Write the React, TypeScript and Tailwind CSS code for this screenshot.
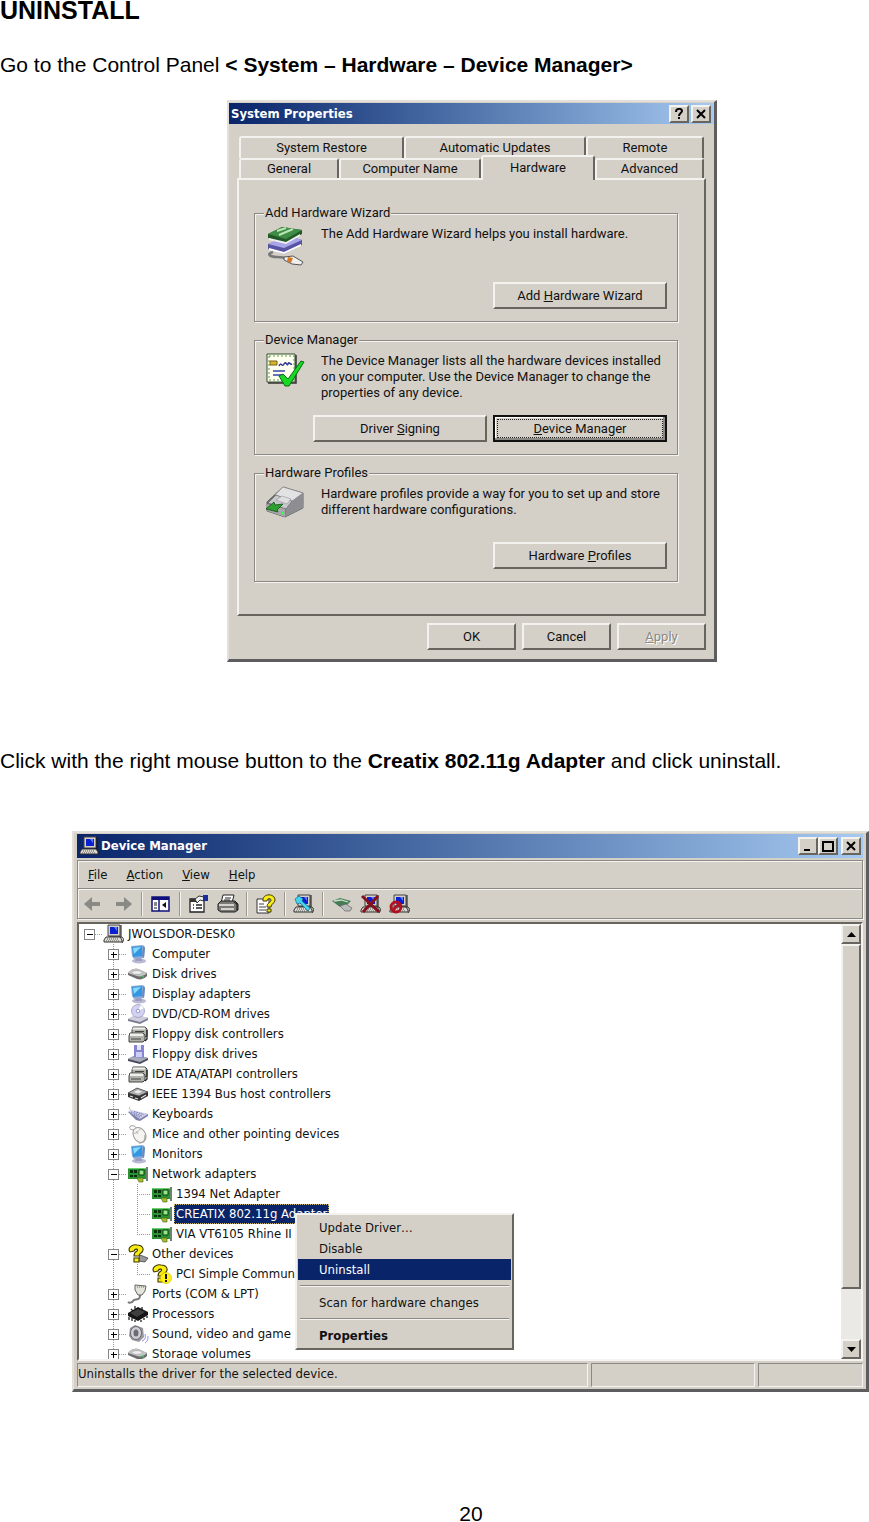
import React from "react";

const ui = "font-['Liberation_Sans',Arial,sans-serif]";
const dialogFont = "font-[Roboto,'Liberation_Sans',sans-serif]";
const tahoma = "font-['DejaVu_Sans_Condensed','DejaVu_Sans',sans-serif]";
const raised = "bg-[#d4d0c8] border-t-2 border-l-2 border-b-2 border-r-2 border-t-[#f4f2ee] border-l-[#f4f2ee] border-b-[#68655f] border-r-[#68655f]";

/* ---------- shared drawings ---------- */

function Svg({ size = "h-5 w-[22px]", box = "0 0 22 20", children }: { size?: string; box?: string; children: React.ReactNode }) {
  return (
    <svg className={`${size} shrink-0`} viewBox={box} aria-hidden="true">
      {children}
    </svg>
  );
}

function PcShape() {
  return (
    <>
      <path d="M5 1h12v11H5z" fill="#d4d0c8" stroke="#444" />
      <path d="M7 3h8v7H7z" fill="#0a1fd0" />
      <path d="M11 3h3v4z" fill="#5f7dff" />
      <path d="M18 1v12H6" fill="none" stroke="#111" />
      <path d="M3 13h14l2 3v2H1v-2z" fill="#dedbd3" stroke="#333" />
      <path d="M4 15h12M3 17h13" stroke="#555" strokeDasharray="1 1" />
      <path d="M18 13c3 0 3 4 1 6" fill="none" stroke="#222" />
    </>
  );
}

function MonitorIcon() {
  return (
    <Svg>
      <ellipse cx="12" cy="17" rx="7" ry="2.5" fill="#b9b9d2" />
      <path d="M9 12h5l1 5H8z" fill="#9c9cc2" />
      <path d="M4 2l12-1 2 2-1 11-10 1-2-3z" fill="#8fabd4" />
      <path d="M5 3l10-1v10l-9 1z" fill="#3296e4" />
      <path d="M6 4l8-1-7 7z" fill="#86dcf8" />
      <path d="M16 2l2 2-1 10-2-2z" fill="#7088b8" />
    </Svg>
  );
}

function DiskIcon() {
  return (
    <Svg>
      <path d="M1 9c3-4 7-5 10-4l9 4v3c-3 3-7 4-10 3l-9-4z" fill="#6d6d6d" />
      <path d="M1 9c3-4 7-5 10-4l9 4c-3 3-7 4-10 3z" fill="#c4c4c4" />
      <ellipse cx="10" cy="8.500" rx="5" ry="2" fill="#eee" stroke="#999" strokeWidth=".6" />
      <circle cx="16" cy="12.500" r="1" fill="#3c6" />
    </Svg>
  );
}

function CdIcon() {
  return (
    <Svg>
      <path d="M1 15l8-4 12 3v2l-8 4-12-3z" fill="#7d7d92" />
      <path d="M1 15l8-4 12 3-8 4z" fill="#cfcfdd" />
      <circle cx="11" cy="7" r="6.500" fill="#d4d2f3" stroke="#9090bc" strokeWidth=".7" />
      <path d="M11 7l3-6 3 3z" fill="#fff" />
      <circle cx="11" cy="7" r="1.800" fill="#fff" stroke="#8585c0" strokeWidth=".8" />
    </Svg>
  );
}

function ControllerIcon() {
  return (
    <Svg>
      <path d="M6 3h12l2 2v7l-2 1H5V6z" fill="#b2b2ac" stroke="#333" strokeWidth=".9" />
      <path d="M6 3.500h12v2H5z" fill="#efefec" />
      <path d="M3 9h13l2 2v5l-2 2H2v-6z" fill="#b2b2ac" stroke="#333" strokeWidth=".9" />
      <path d="M3 9.500h13v2.500H3z" fill="#efefec" />
      <path d="M4 15h10M8 7.500h9" stroke="#444" />
      <path d="M18 17l2-2V6" fill="none" stroke="#222" strokeWidth="1.300" />
    </Svg>
  );
}

function FloppyIcon() {
  return (
    <Svg>
      <path d="M1 15l8-4 12 3v2l-8 4-12-3z" fill="#484b5c" />
      <path d="M1 15l8-4 12 3-8 4z" fill="#a9abba" />
      <path d="M7 1h10v13l-10-1z" fill="#8686d0" />
      <path d="M10 1h4v5h-4z" fill="#e5e5f7" />
      <path d="M9 8h6v5H9z" fill="#cfcff4" />
    </Svg>
  );
}

function FirewireIcon() {
  return (
    <Svg>
      <path d="M1 9l9-5 11 4v4l-9 5-11-4z" fill="#333" />
      <path d="M1 9l9-5 11 4-9 4z" fill="#b0b0b0" stroke="#333" strokeWidth=".6" />
      <path d="M7 8l4-2 4 1.500-4 2z" fill="#eee" />
      <path d="M3 12l3 1M8 14l3 1M14 14l5-3" stroke="#ddd" strokeWidth="1.300" />
    </Svg>
  );
}

function KeyboardIcon() {
  return (
    <Svg>
      <path d="M3 3c-2 2 1 3 2 4" fill="none" stroke="#aaa" />
      <path d="M1 8l3-1 17 3v2l-8 5-4-1z" fill="#8082ae" />
      <path d="M1 7l4-1 16 4-8 5z" fill="#ccceea" />
      <path d="M4 8l11 4M7 7.500l10 3M7 10.500l6 2.500" stroke="#7578ac" strokeDasharray="1.500 1" />
    </Svg>
  );
}

function MouseIcon() {
  return (
    <Svg>
      <path d="M7 6C3 6 1 3 4 2s5 1 6 3" fill="none" stroke="#999" />
      <ellipse cx="12.500" cy="11" rx="6" ry="8" transform="rotate(-30 12.500 11)" fill="#f5f4f1" stroke="#999" />
      <path d="M6 9c3 1 5-1 7-4M9 7l2 3" fill="none" stroke="#aaa" strokeWidth=".8" />
      <path d="M12 19c5 0 7-3 6-8" fill="none" stroke="#a9a59b" strokeWidth="1.600" />
    </Svg>
  );
}

function NicIcon() {
  return (
    <Svg>
      <path d="M1 4h18v11H1z" fill="#2a9432" />
      <path d="M1 4h18v1H1z" fill="#6cd073" />
      <path d="M3 6h3v3H3zM7 6h3v3H7zM3 11h3v2H3zM7 11h3v2H7z" fill="#082f0c" />
      <path d="M12 6h5v5h-5z" fill="#9be488" stroke="#0a4010" />
      <path d="M10 14h6v4h-4z" fill="#a9bc2f" stroke="#44601a" strokeWidth=".6" />
      <path d="M20 3v14" stroke="#3b5a3b" strokeWidth="1.500" />
    </Svg>
  );
}

function QuestionShape() {
  return (
    <path d="M3 8c-3-4 2-8 7-7 6 0 8 5 4 8-2 1-2 2-2 3H7c0-3 1-4 3-5 2-2-2-3-3 0zM7 14h5v4H7z" fill="#f8ec12" stroke="#3d3800" strokeWidth="1.100" />
  );
}

function UnknownIcon() {
  return (
    <Svg>
      <path d="M13 11l8 3-3 4-7-1z" fill="#999" stroke="#333" strokeWidth=".7" />
      <QuestionShape />
    </Svg>
  );
}

function UnknownWarnIcon() {
  return (
    <Svg>
      <QuestionShape />
      <circle cx="15" cy="14" r="5.500" fill="#fff01a" stroke="#c9b800" strokeWidth=".6" />
      <path d="M14 10h2v5h-2zM14 16h2v2h-2z" fill="#111" />
    </Svg>
  );
}

function PortIcon() {
  return (
    <Svg>
      <path d="M8 1l11 1-1 5-3 4h-4L8 6z" fill="#e3e3dc" stroke="#555" strokeWidth=".9" />
      <path d="M10 3h7" stroke="#666" strokeDasharray="1 1" />
      <path d="M13 11c0 7-5 3-7 6-1 2-4 2-5 1" fill="none" stroke="#777" strokeWidth="2" />
    </Svg>
  );
}

function CpuIcon() {
  return (
    <Svg>
      <path d="M1 9l10-6 10 5v3l-10 6-10-5z" fill="#161616" />
      <path d="M3 9l8-4 7 3-8 5z" fill="#3f3f3f" />
      <path d="M2 13v3M5 14v3M8 16v2M14 16v2M17 14v2M20 12v2M4 5l2 2M8 2v3M15 3v3" stroke="#222" strokeWidth="1.300" />
    </Svg>
  );
}

function SpeakerIcon() {
  return (
    <Svg>
      <path d="M3 4l5-3 8 3 1 9-5 5-7-2-3-4z" fill="#97979c" />
      <ellipse cx="9" cy="9" rx="5.500" ry="6.500" fill="#cfcfd5" stroke="#6a6a70" />
      <ellipse cx="9" cy="9" rx="2.500" ry="3.500" fill="#6b6b75" />
      <path d="M15 17c3-1 4-4 3-7M18 19c3-2 3-5 3-7" fill="none" stroke="#8c8ce6" />
    </Svg>
  );
}

function RootIcon() {
  return (
    <Svg>
      <PcShape />
    </Svg>
  );
}

/* ---------- System Properties ---------- */

function CaptionButton({ label, children }: { label: string; children: React.ReactNode }) {
  return (
    <button aria-label={label} className={`flex h-[18px] w-5 items-center justify-center ${raised}`}>
      <svg className="h-3 w-3" viewBox="0 0 12 12" aria-hidden="true">
        {children}
      </svg>
    </button>
  );
}

function CloseGlyph() {
  return <path d="M2 2l8 8M10 2l-8 8" stroke="#000" strokeWidth="2" />;
}

function Tab({ className, children }: { className: string; children: React.ReactNode }) {
  return (
    <button
      role="tab"
      className={`rounded-t-[3px] border-t-2 border-r-2 border-l-2 border-t-[#f4f2ee] border-r-[#68655f] border-l-[#f4f2ee] bg-[#d4d0c8] text-center ${className}`}
    >
      {children}
    </button>
  );
}

function PushButton({ className, disabled, children }: { className: string; disabled?: boolean; children: React.ReactNode }) {
  return (
    <button disabled={disabled} className={`h-[27px] text-center ${raised} ${className}`}>
      {children}
    </button>
  );
}

function Group({ title, height, icon, text, children }: { title: string; height: string; icon: React.ReactNode; text: React.ReactNode; children: React.ReactNode }) {
  return (
    <fieldset className="border border-[#8c8984] px-[10px] pb-3 shadow-[1px_1px_0_#f6f4f0,inset_1px_1px_0_#f6f4f0]">
      <legend className="-ml-px bg-[#d4d0c8] px-px leading-4">{title}</legend>
      <div className={`flex flex-col ${height}`}>
        <div className="flex grow gap-4 pt-[5px]">
          <div className="w-10">{icon}</div>
          <p className="leading-4 whitespace-nowrap">{text}</p>
        </div>
        <div className="flex justify-end gap-[6px]">{children}</div>
      </div>
    </fieldset>
  );
}

function WizardIcon() {
  return (
    <Svg size="h-10 w-10" box="0 0 40 40">
      <path d="M3 18l20-8 14 4v5l-18 9L3 23z" fill="#5953a4" />
      <path d="M3 18l20-8 14 4-18 8z" fill="#aaa5ea" />
      <path d="M4 22l15 4 17-8v2l-17 8-15-4z" fill="#fff" />
      <path d="M3 8L17 1l20 3v4l-16 9L3 12z" fill="#225a27" />
      <path d="M3 8L17 1l20 3-16 9z" fill="#3f8d45" />
      <path d="M12 5l9-3M14 9l14-6" stroke="#b9e5b9" strokeWidth="2" />
      <path d="M4 12l17 4 14-8v2l-14 8-17-4z" fill="#eee" />
      <path d="M8 26c-7 2-3 5 4 5s8 1 11 3" fill="none" stroke="#777" strokeWidth="2.500" />
      <path d="M19 31l9-1 10 6-2 3-9-1-8-4z" fill="#eee" stroke="#555" />
      <path d="M23 31l5 1-2 5-4-2z" fill="#d77923" />
    </Svg>
  );
}

function SigningIcon() {
  return (
    <Svg size="h-10 w-10" box="0 0 40 40">
      <path d="M2 1h28v28H2z" fill="#fffff0" stroke="#31502d" />
      <path d="M4 3h25v24H4z" fill="none" stroke="#5a9b48" strokeDasharray="2 2" />
      <path d="M5 8h7v4H5z" fill="#d9b52e" stroke="#7a6114" />
      <path d="M14 13c2-5 3 2 5-2s3 3 4 0 2 1 4 0" fill="none" stroke="#32329a" strokeWidth="1.500" />
      <path d="M8 18h12M8 22h10" stroke="#3945a8" strokeWidth="1.500" />
      <path d="M31 2v28H3" fill="none" stroke="#333" strokeWidth="1.500" />
      <path d="M14 23l4-2 5 5L36 8l3 1-15 24h-4z" fill="#15d922" stroke="#0b6a14" />
    </Svg>
  );
}

function ProfilesIcon() {
  return (
    <Svg size="h-10 w-10" box="0 0 40 40">
      <path d="M2 16L18 1l20 6v15L20 31 2 25z" fill="#77777a" stroke="#4a4a4a" strokeWidth=".8" />
      <path d="M10 9l8-8 20 6-12 9z" fill="#e2e2e5" stroke="#888" strokeWidth=".6" />
      <path d="M3 17l8-8 16 6-6 8z" fill="#c8c8cb" stroke="#666" strokeWidth=".7" />
      <path d="M11 14l6-4 9 3-4 5z" fill="#dedee1" stroke="#888" strokeWidth=".5" />
      <path d="M21 23l6-8 11-8v15L20 31z" fill="#8e8e92" />
      <path d="M2 18l18 5v8L2 25z" fill="#a7a7aa" />
      <path d="M1 23l8-7 1 3 8-1-6 6 1 2z" fill="#2da02f" stroke="#125218" strokeWidth=".8" />
      <circle cx="18" cy="27" r="1.200" fill="#3f4" />
    </Svg>
  );
}

function SystemProperties() {
  return (
    <section className={`ml-[227px] flex max-w-[490px] flex-col border-t-2 border-r-[3px] border-b-[3px] border-l-2 border-t-[#e3e0da] border-r-[#5d5d60] border-b-[#5d5d60] border-l-[#e3e0da] bg-[#d4d0c8] pt-px text-[13px] leading-4 text-[#111] ${dialogFont}`}>
      <header className="flex h-[21px] items-center bg-linear-to-r from-[#0a246a] to-[#a6caf0] pr-[3px] pl-[2px]">
        <h2 className={`grow text-[13px] font-bold text-white ${tahoma}`}>System Properties</h2>
        <div className="flex gap-[2px]">
          <CaptionButton label="Help">
            <path d="M3 4c0-4 6-4 6-1 0 2-3 2-3 5M6 9v2" fill="none" stroke="#000" strokeWidth="2" />
          </CaptionButton>
          <CaptionButton label="Close">
            <CloseGlyph />
          </CaptionButton>
        </div>
      </header>
      <div className="px-2 pt-3">
        <div role="tablist">
          <div className="flex h-[22px] px-[2px]">
            <Tab className="w-[165px]">System Restore</Tab>
            <Tab className="w-[182px]">Automatic Updates</Tab>
            <Tab className="grow">Remote</Tab>
          </div>
          <div className="flex h-5 px-[2px]">
            <Tab className="w-[100px]">General</Tab>
            <Tab className="w-[142px]">Computer Name</Tab>
            <Tab className="relative z-10 -mt-[3px] -mb-[2px] w-[114px] pb-[2px]">Hardware</Tab>
            <Tab className="grow">Advanced</Tab>
          </div>
        </div>
        <div className="flex flex-col gap-[10px] border-2 border-t-[#f4f2ee] border-r-[#68655f] border-b-[#68655f] border-l-[#f4f2ee] pt-[25px] pr-[26px] pb-8 pl-[15px]">
          <Group title="Add Hardware Wizard" height="h-[88px]" icon={<WizardIcon />} text="The Add Hardware Wizard helps you install hardware.">
            <PushButton className="w-[174px]">
              Add <u>H</u>ardware Wizard
            </PushButton>
          </Group>
          <Group
            title="Device Manager"
            height="h-[94px]"
            icon={<SigningIcon />}
            text={
              <>
                The Device Manager lists all the hardware devices installed
                <br />
                on your computer. Use the Device Manager to change the
                <br />
                properties of any device.
              </>
            }
          >
            <PushButton className="w-[174px]">
              Driver <u>S</u>igning
            </PushButton>
            <button className="h-[27px] w-[174px] border-2 border-[#111] bg-[#d4d0c8] p-[2px] shadow-[inset_-2px_-2px_0_#8c8984,inset_1px_1px_0_#fff]">
              <span className="flex h-full items-center justify-center border border-dotted border-[#222]">
                <span>
                  <u>D</u>evice Manager
                </span>
              </span>
            </button>
          </Group>
          <Group
            title="Hardware Profiles"
            height="h-[88px]"
            icon={<ProfilesIcon />}
            text={
              <>
                Hardware profiles provide a way for you to set up and store
                <br />
                different hardware configurations.
              </>
            }
          >
            <PushButton className="w-[174px]">
              Hardware <u>P</u>rofiles
            </PushButton>
          </Group>
        </div>
        <div className="flex justify-end gap-[6px] pt-[7px] pb-[9px]">
          <PushButton className="w-[89px]">OK</PushButton>
          <PushButton className="w-[89px]">Cancel</PushButton>
          <PushButton disabled className="w-[89px] text-[#8c8984] [text-shadow:1px_1px_0_#fff]">
            <u>A</u>pply
          </PushButton>
        </div>
      </div>
    </section>
  );
}

/* ---------- Device Manager ---------- */

type Guide = "plus" | "minus" | "root" | "tee" | "elbow" | "line" | "blank";

function GuideCell({ kind }: { kind: Guide }) {
  if (kind === "blank") return <span className="w-6 shrink-0" />;
  const boxed = kind === "plus" || kind === "minus" || kind === "root";
  const art = (
    <svg className="h-5 w-6" viewBox="0 0 24 20" aria-hidden="true" shapeRendering="crispEdges">
      {kind !== "root" && <path d={kind === "elbow" ? "M10.500 0v10" : "M10.500 0v20"} stroke="#999" strokeDasharray="1 1" />}
      {kind !== "line" && <path d="M10 10.500h14" stroke="#999" strokeDasharray="1 1" />}
      {boxed && <path d="M5.500 5.500h10v10h-10z" fill="#fff" stroke="#858585" />}
      {boxed && <path d="M8 10.500h6" stroke="#000" />}
      {kind === "plus" && <path d="M10.500 8v6" stroke="#000" />}
    </svg>
  );
  return boxed ? (
    <button aria-label={kind === "plus" ? "Expand" : "Collapse"} className="w-6 shrink-0">
      {art}
    </button>
  ) : (
    <span className="w-6 shrink-0">{art}</span>
  );
}

const rows: { guides: Guide[]; icon: () => React.ReactElement; text: string; selected?: boolean }[] = [
  { guides: ["root"], icon: RootIcon, text: "JWOLSDOR-DESK0" },
  { guides: ["blank", "plus"], icon: MonitorIcon, text: "Computer" },
  { guides: ["blank", "plus"], icon: DiskIcon, text: "Disk drives" },
  { guides: ["blank", "plus"], icon: MonitorIcon, text: "Display adapters" },
  { guides: ["blank", "plus"], icon: CdIcon, text: "DVD/CD-ROM drives" },
  { guides: ["blank", "plus"], icon: ControllerIcon, text: "Floppy disk controllers" },
  { guides: ["blank", "plus"], icon: FloppyIcon, text: "Floppy disk drives" },
  { guides: ["blank", "plus"], icon: ControllerIcon, text: "IDE ATA/ATAPI controllers" },
  { guides: ["blank", "plus"], icon: FirewireIcon, text: "IEEE 1394 Bus host controllers" },
  { guides: ["blank", "plus"], icon: KeyboardIcon, text: "Keyboards" },
  { guides: ["blank", "plus"], icon: MouseIcon, text: "Mice and other pointing devices" },
  { guides: ["blank", "plus"], icon: MonitorIcon, text: "Monitors" },
  { guides: ["blank", "minus"], icon: NicIcon, text: "Network adapters" },
  { guides: ["blank", "line", "tee"], icon: NicIcon, text: "1394 Net Adapter" },
  { guides: ["blank", "line", "tee"], icon: NicIcon, text: "CREATIX 802.11g Adapter", selected: true },
  { guides: ["blank", "line", "elbow"], icon: NicIcon, text: "VIA VT6105 Rhine II" },
  { guides: ["blank", "minus"], icon: UnknownIcon, text: "Other devices" },
  { guides: ["blank", "line", "elbow"], icon: UnknownWarnIcon, text: "PCI Simple Communi" },
  { guides: ["blank", "plus"], icon: PortIcon, text: "Ports (COM & LPT)" },
  { guides: ["blank", "plus"], icon: CpuIcon, text: "Processors" },
  { guides: ["blank", "plus"], icon: SpeakerIcon, text: "Sound, video and game" },
  { guides: ["blank", "plus"], icon: DiskIcon, text: "Storage volumes" },
];

function Separator() {
  return <span className="h-6 w-[2px] border-r border-l border-r-[#f6f4f0] border-l-[#9a978f]" />;
}

function Tool({ label, children }: { label: string; children: React.ReactNode }) {
  return (
    <button aria-label={label} className="flex">
      <Svg>{children}</Svg>
    </button>
  );
}

function Toolbar() {
  return (
    <div className="flex h-[29px] items-center gap-[7px] border-t border-t-[#f6f4f0] pl-[5px]">
      <Tool label="Back">
        <path d="M1 10l8-7v5h8v4H9v5z" fill="#8b8984" />
      </Tool>
      <Tool label="Forward">
        <path d="M20 10l-8-7v5H4v4h8v5z" fill="#8b8984" />
      </Tool>
      <Separator />
      <Tool label="Show tree">
        <path d="M2 3h17v14H2z" fill="#fff" stroke="#10107c" strokeWidth="1.500" />
        <path d="M2 3h17v3H2z" fill="#10107c" />
        <path d="M9 6v11" stroke="#10107c" strokeWidth="1.500" />
        <path d="M4 9h3M4 11h3M4 14h3" stroke="#111" />
        <path d="M16 8v6l-4-3z" fill="#111" />
      </Tool>
      <Separator />
      <Tool label="Properties">
        <path d="M2 5h14v13H2z" fill="#fff" stroke="#222" strokeWidth="1.300" />
        <path d="M2 5h9v3H2z" fill="#333" />
        <path d="M5 11h1M5 14h1M8 11h6M8 14h6" stroke="#222" strokeWidth="1.500" />
        <path d="M7 5l4-3 5 1v4l-4-1-3 3z" fill="#eee" stroke="#333" />
        <path d="M15 1h5v6h-5z" fill="#1a2c9c" />
      </Tool>
      <Tool label="Print">
        <path d="M6 1h11l-2 8H4z" fill="#fff" stroke="#222" />
        <path d="M8 4h6M7 6h6" stroke="#222" />
        <path d="M1 10l3-3h14l3 3v6l-3 2H4l-3-2z" fill="#7b7974" stroke="#222" />
        <path d="M2 11h15M4 15h13" stroke="#eee" strokeWidth="1.300" />
        <path d="M17 8l3 2v6" fill="none" stroke="#111" />
      </Tool>
      <Separator />
      <Tool label="Help">
        <path d="M2 5h12v14H2z" fill="#fff" stroke="#333" />
        <path d="M4 10h5M4 13h7M4 16h7" stroke="#444" />
        <path d="M8 7c-1-8 12-8 12-1 0 4-4 3-4 7h-4c0-5 4-4 4-7 0-2-4-2-4 1zM12 15h4v3h-4z" fill="#f8ec12" stroke="#3d3800" />
      </Tool>
      <Separator />
      <Tool label="Scan for hardware changes">
        <PcShape />
        <path d="M2 5l4-3 4 3-1 2 8 7-2 3-8-8-3 1z" fill="#43d5ef" stroke="#126a8a" strokeWidth=".7" />
      </Tool>
      <Separator />
      <Tool label="Update driver">
        <path d="M1 7l8-3 11 3-4 4-7 2z" fill="#477b54" />
        <path d="M3 7l7-1 7 2" fill="none" stroke="#c7e3cb" strokeWidth="1.300" />
        <path d="M9 12l6-2 6 4-2 3-5 0z" fill="#bbb" stroke="#666" strokeWidth=".7" />
      </Tool>
      <Tool label="Uninstall">
        <PcShape />
        <path d="M2 2l17 16M18 2L3 18" stroke="#86101c" strokeWidth="3" />
      </Tool>
      <Tool label="Disable">
        <PcShape />
        <circle cx="7" cy="13" r="5" fill="none" stroke="#b01020" strokeWidth="2.800" />
        <path d="M4 16l6-6" stroke="#b01020" strokeWidth="2.800" />
      </Tool>
    </div>
  );
}

function MenuItem({ className = "", children }: { className?: string; children: React.ReactNode }) {
  return (
    <button role="menuitem" className={`h-[21px] pl-[21px] text-left ${className}`}>
      {children}
    </button>
  );
}

function ContextMenu() {
  const rule = <hr className="mx-[2px] my-[5px] h-[2px] border-t border-b border-t-[#8c8984] border-b-[#f6f4f0]" />;
  return (
    <div role="menu" className={`absolute top-[289px] left-[216px] flex w-[219px] flex-col px-[1px] py-[2px] whitespace-nowrap ${raised}`}>
      <MenuItem>Update Driver…</MenuItem>
      <MenuItem>Disable</MenuItem>
      <MenuItem className="bg-[#0a246a] text-white">Uninstall</MenuItem>
      {rule}
      <MenuItem>Scan for hardware changes</MenuItem>
      {rule}
      <MenuItem className="font-bold">Properties</MenuItem>
    </div>
  );
}

function DeviceManager() {
  return (
    <section className={`ml-[72px] border-t-2 border-r-[3px] border-b-[3px] border-l-2 border-t-[#e3e0da] border-r-[#5d5d60] border-b-[#5d5d60] border-l-[#e3e0da] bg-[#d4d0c8] px-[3px] pt-px pb-[2px] text-[13px] leading-5 text-[#111] ${tahoma}`}>
      <header className="flex h-6 items-center bg-linear-to-r from-[#0a246a] to-[#a6caf0] pr-[2px] pl-[2px]">
        <RootIcon />
        <h2 className="grow font-bold text-white">Device Manager</h2>
        <CaptionButton label="Minimize">
          <path d="M2 10h6" stroke="#000" strokeWidth="2" />
        </CaptionButton>
        <CaptionButton label="Maximize">
          <path d="M1 2h10M1 1v10h10V1" fill="none" stroke="#000" strokeWidth="2" />
        </CaptionButton>
        <span className="w-[3px]" />
        <CaptionButton label="Close">
          <CloseGlyph />
        </CaptionButton>
      </header>
      <div className="mt-[2px] border border-[#8c8984] shadow-[1px_1px_0_#f6f4f0,inset_1px_1px_0_#f6f4f0]">
        <nav className="flex h-7 items-center gap-[19px] border-b border-b-[#8c8984] pl-[10px]">
          <button><u>F</u>ile</button>
          <button><u>A</u>ction</button>
          <button><u>V</u>iew</button>
          <button><u>H</u>elp</button>
        </nav>
        <Toolbar />
      </div>
      <div className="relative mt-[3px] border-2 border-t-[#68655f] border-r-[#f6f4f0] border-b-[#f6f4f0] border-l-[#68655f] bg-white">
        <div className="flex h-[435px]">
          <ul className="grow overflow-hidden">
            {rows.map((row, i) => {
              const Icon = row.icon;
              return (
                <li key={i} className="flex h-5 whitespace-nowrap">
                  {row.guides.map((g, j) => (
                    <GuideCell key={j} kind={g} />
                  ))}
                  <Icon />
                  <span className={row.selected ? "ml-px border border-dotted border-[#c9b66a] bg-[#0a246a] px-px leading-[18px] text-white" : "pl-[3px]"}>{row.text}</span>
                </li>
              );
            })}
          </ul>
          <div className="flex w-5 flex-col bg-[#ebe9e5]">
            <button aria-label="Scroll up" className={`flex h-5 items-center justify-center ${raised}`}>
              <svg className="h-[5px] w-[9px]" viewBox="0 0 9 5" aria-hidden="true"><path d="M0 5L4.500 0 9 5z" /></svg>
            </button>
            <div className={`h-[345px] ${raised}`} />
            <div className="grow" />
            <button aria-label="Scroll down" className={`flex h-5 items-center justify-center ${raised}`}>
              <svg className="h-[5px] w-[9px]" viewBox="0 0 9 5" aria-hidden="true"><path d="M0 0h9L4.500 5z" /></svg>
            </button>
          </div>
        </div>
        <ContextMenu />
      </div>
      <footer className="mt-[2px] flex h-6 gap-[3px]">
        <p className="grow border border-t-[#8c8984] border-r-[#f6f4f0] border-b-[#f6f4f0] border-l-[#8c8984]">Uninstalls the driver for the selected device.</p>
        <span className="w-[164px] border border-t-[#8c8984] border-r-[#f6f4f0] border-b-[#f6f4f0] border-l-[#8c8984]" />
        <span className="w-[105px] border border-t-[#8c8984] border-r-[#f6f4f0] border-b-[#f6f4f0] border-l-[#8c8984]" />
      </footer>
    </section>
  );
}

export default function App() {
  return (
    <main className={`bg-white text-[21px] leading-6 text-black ${ui}`}>
      <h1 className="text-[25px] leading-5 font-bold">UNINSTALL</h1>
      <p className="mt-[33px] mb-[23px]">
        Go to the Control Panel <b>&lt; System – Hardware – Device Manager&gt;</b>
      </p>
      <SystemProperties />
      <p className="mt-[87px] mb-[58px]">
        Click with the right mouse button to the <b>Creatix 802.11g Adapter</b> and click uninstall.
      </p>
      <DeviceManager />
      <footer className="mt-[112px] pl-[73px] text-center leading-5">20</footer>
    </main>
  );
}
